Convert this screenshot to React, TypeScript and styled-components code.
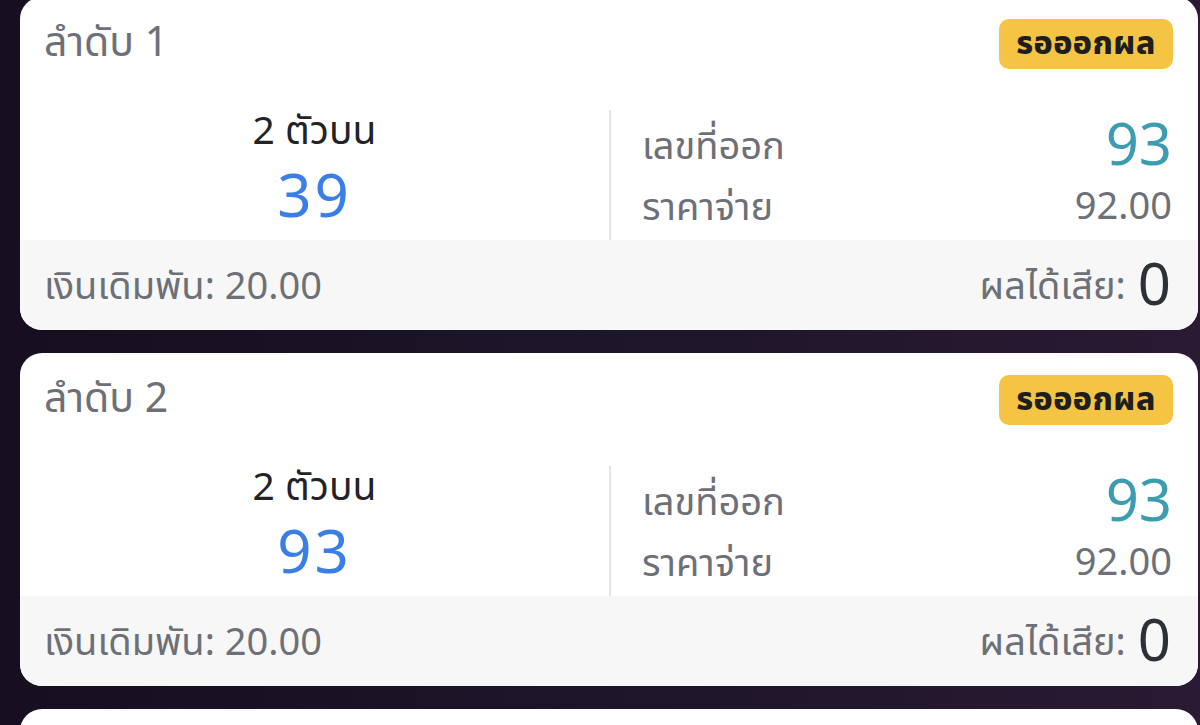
import React from 'react';
import styled, { createGlobalStyle } from 'styled-components';

const GlobalStyle = createGlobalStyle`
  html, body {
    margin: 0;
    padding: 0;
    height: 100%;
    overflow: hidden;
  }
  body {
    background: linear-gradient(90deg, #170f1f 0%, #1d1529 50%, #2a1a33 100%);
    font-family: "Noto Sans Thai", "Noto Sans", "Open Sans", sans-serif;
  }
`;

const List = styled.div`
  display: flex;
  flex-direction: column;
  gap: 23px;
  margin-top: -3px;
  padding: 0 2px 0 20px;
`;

const Card = styled.div`
  background: #ffffff;
  border-radius: 22px;
  overflow: hidden;
  flex-shrink: 0;
`;

const Header = styled.div`
  height: 88px;
  display: flex;
  align-items: center;
  justify-content: space-between;
  padding: 0 25px 0 24px;
  box-sizing: border-box;
`;

const Title = styled.div`
  font-size: 41px;
  color: #6d7076;
  line-height: 1;
  padding-top: 4px;
`;

const Badge = styled.div`
  width: 174px;
  height: 50px;
  margin-top: 6px;
  border-radius: 10px;
  background: #f5c443;
  color: #1e1e1e;
  font-weight: 800;
  font-size: 32px;
  display: flex;
  align-items: center;
  justify-content: center;
  letter-spacing: 0.5px;
`;

const Body = styled.div`
  height: 155px;
  display: grid;
  grid-template-columns: 589px 1fr;
`;

const BetCol = styled.div`
  display: flex;
  flex-direction: column;
  align-items: center;
  padding-top: 23px;
`;

const BetType = styled.div`
  font-size: 39px;
  color: #222326;
  line-height: 50px;
`;

const BetNumber = styled.div`
  font-size: 60px;
  color: #3a7fe6;
  line-height: 64px;
  margin-top: 9px;
  letter-spacing: 3px;
`;

const ResultCol = styled.div`
  margin-top: 25px;
  border-left: 2px solid #e4e4e6;
  padding: 6px 26px 0 31px;
  display: flex;
  flex-direction: column;
`;

const Row = styled.div<{ $h: number }>`
  display: flex;
  align-items: center;
  justify-content: space-between;
  height: ${(p) => p.$h}px;
`;

const Label = styled.div`
  font-size: 38px;
  color: #6d7076;
`;

const Value = styled.div<{ $big?: boolean }>`
  font-size: ${(p) => (p.$big ? 58 : 38)}px;
  color: ${(p) => (p.$big ? '#3d9db0' : '#6d7076')};
  line-height: 1;
`;

const Footer = styled.div`
  height: 90px;
  background: #f7f7f8;
  display: flex;
  align-items: center;
  justify-content: space-between;
  padding: 0 27px 0 24px;
  box-sizing: border-box;
`;

const FooterText = styled.div`
  font-size: 38px;
  color: #6d7076;
  display: flex;
  align-items: center;
  gap: 12px;
  padding-top: 4px;
`;

const Profit = styled.span`
  font-size: 58px;
  color: #2d3035;
  line-height: 1;
`;

type Ticket = {
  order: number;
  type: string;
  number: string;
  result: string;
  rate: string;
  stake: string;
  profit: string;
};

const tickets: Ticket[] = [
  { order: 1, type: '2 ตัวบน', number: '39', result: '93', rate: '92.00', stake: '20.00', profit: '0' },
  { order: 2, type: '2 ตัวบน', number: '93', result: '93', rate: '92.00', stake: '20.00', profit: '0' },
  { order: 3, type: '2 ตัวบน', number: '11', result: '93', rate: '92.00', stake: '20.00', profit: '0' },
];

export default function App() {
  return (
    <>
      <GlobalStyle />
      <List>
        {tickets.map((t) => (
          <Card key={t.order}>
            <Header>
              <Title>ลำดับ {t.order}</Title>
              <Badge>รอออกผล</Badge>
            </Header>
            <Body>
              <BetCol>
                <BetType>{t.type}</BetType>
                <BetNumber>{t.number}</BetNumber>
              </BetCol>
              <ResultCol>
                <Row $h={62}>
                  <Label>เลขที่ออก</Label>
                  <Value $big>{t.result}</Value>
                </Row>
                <Row $h={60}>
                  <Label>ราคาจ่าย</Label>
                  <Value>{t.rate}</Value>
                </Row>
              </ResultCol>
            </Body>
            <Footer>
              <FooterText>เงินเดิมพัน: {t.stake}</FooterText>
              <FooterText>
                ผลได้เสีย: <Profit>{t.profit}</Profit>
              </FooterText>
            </Footer>
          </Card>
        ))}
      </List>
    </>
  );
}
